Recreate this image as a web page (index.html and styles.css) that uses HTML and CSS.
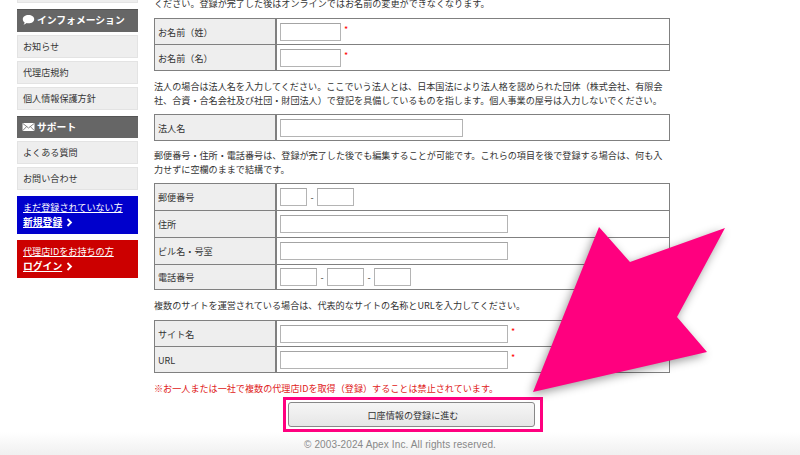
FILE: index.html
```html
<!DOCTYPE html>
<html lang="ja">
<head>
<meta charset="utf-8">
<title>代理店登録</title>
<link rel="stylesheet" href="styles.css">
</head>
<body>
<div class="page">
  <div class="content">
    <aside class="sidebar">
      <div class="clip-item"></div>
      <div class="side-head info">
        <svg class="ic" width="13" height="12" viewBox="0 0 13 12"><path d="M6.5 1C9.8 1 12.2 2.8 12.2 5.2S9.8 9.3 6.5 9.3C5.8 9.3 5.2 9.2 4.7 9.1 3.8 10 2.7 10.6 1.5 10.8 2.2 10 2.6 9.2 2.7 8.5 1.5 7.7.8 6.5.8 5.2.8 2.8 3.2 1 6.5 1Z" fill="#fff"/></svg>
        <span>インフォメーション</span>
      </div>
      <a class="side-item">お知らせ</a>
      <a class="side-item">代理店規約</a>
      <a class="side-item">個人情報保護方針</a>
      <div class="side-head support">
        <svg class="ic" width="13" height="10" viewBox="0 0 13 10"><path d="M.5 1H12.5V9H.5Z" fill="#fff"/><path d="M.5 1.2 6.5 6 12.5 1.2M.5 8.8 4.6 4.6M12.5 8.8 8.4 4.6" fill="none" stroke="#666" stroke-width=".8"/></svg>
        <span>サポート</span>
      </div>
      <a class="side-item">よくある質問</a>
      <a class="side-item">お問い合わせ</a>
      <a class="cta blue">
        <span class="cta-top">まだ登録されていない方</span>
        <span class="cta-main"><span class="cta-link">新規登録</span><svg class="chev" width="7" height="9" viewBox="0 0 7 9"><path d="M1.5 1 5 4.5 1.5 8" fill="none" stroke="#fff" stroke-width="1.8"/></svg></span>
      </a>
      <a class="cta red">
        <span class="cta-top">代理店IDをお持ちの方</span>
        <span class="cta-main"><span class="cta-link">ログイン</span><svg class="chev" width="7" height="9" viewBox="0 0 7 9"><path d="M1.5 1 5 4.5 1.5 8" fill="none" stroke="#fff" stroke-width="1.8"/></svg></span>
      </a>
    </aside>
    <main class="main">
      <p class="note first">ください。登録が完了した後はオンラインではお名前の変更ができなくなります。</p>
      <table class="form">
        <tr><th>お名前（姓）</th><td><input class="w-s" type="text"><span class="req">*</span></td></tr>
        <tr><th>お名前（名）</th><td><input class="w-s" type="text"><span class="req">*</span></td></tr>
      </table>
      <p class="note">法人の場合は法人名を入力してください。ここでいう法人とは、日本国法により法人格を認められた団体（株式会社、有限会<br>社、合資・合名会社及び社団・財団法人）で登記を具備しているものを指します。個人事業の屋号は入力しないでください。</p>
      <table class="form">
        <tr><th>法人名</th><td><input class="w-m" type="text"></td></tr>
      </table>
      <p class="note tight">郵便番号・住所・電話番号は、登録が完了した後でも編集することが可能です。これらの項目を後で登録する場合は、何も入<br>力せずに空欄のままで結構です。</p>
      <table class="form four">
        <tr><th>郵便番号</th><td><input class="w-zip1" type="text"><span class="dash">-</span><input class="w-zip2" type="text"></td></tr>
        <tr><th>住所</th><td><input class="w-l" type="text"></td></tr>
        <tr><th>ビル名・号室</th><td><input class="w-l" type="text"></td></tr>
        <tr><th>電話番号</th><td><input class="w-tel" type="text"><span class="dash">-</span><input class="w-tel" type="text"><span class="dash">-</span><input class="w-tel" type="text"></td></tr>
      </table>
      <p class="note single">複数のサイトを運営されている場合は、代表的なサイトの名称とURLを入力してください。</p>
      <table class="form">
        <tr><th>サイト名</th><td><input class="w-l" type="text"><span class="req">*</span></td></tr>
        <tr><th>URL</th><td><input class="w-l" type="text"><span class="req">*</span></td></tr>
      </table>
      <p class="warn">※お一人または一社で複数の代理店IDを取得（登録）することは禁止されています。</p>
      <div class="submit-mark"><button class="submit" type="button">口座情報の登録に進む</button></div>
    </main>
  </div>
  <footer class="footer">© 2003-2024 Apex Inc. All rights reserved.</footer>
</div>
<svg class="arrow" width="800" height="455" viewBox="0 0 800 455"><polygon points="599,227 630,262 725,228 677,317 707,352 533,392" fill="#ff007f"/></svg>
</body>
</html>
```
FILE: styles.css
```css
html, body { margin: 0; padding: 0; }
body {
  width: 800px;
  height: 455px;
  overflow: hidden;
  position: relative;
  background: #fff;
  color: #333;
  font-family: "Noto Sans CJK JP", "Liberation Sans", sans-serif;
  font-size: 9.1px;
}
.page { display: flex; flex-direction: column; height: 455px; overflow: hidden; }
.content { display: flex; gap: 16px; padding-left: 17px; }

.sidebar { width: 121px; flex: none; display: flex; flex-direction: column; }
.clip-item { height: 3px; background: #eee; border: 1px solid #e4e4e4; border-top: 0; box-sizing: border-box; margin-bottom: 6px; }
.side-head {
  height: 23px;
  background: #666;
  color: #fff;
  font-weight: 700;
  font-size: 9.8px;
  display: flex;
  align-items: center;
  gap: 2px;
  padding-left: 5px;
  padding-bottom: 1px;
  box-sizing: border-box;
  box-shadow: inset 0 1px 0 #555;
  margin-bottom: 3px;
}
.side-head.support { margin-top: 3px; height: 22px; }
.side-item {
  height: 23px;
  box-sizing: border-box;
  background: #eee;
  border: 1px solid #e3e3e3;
  display: flex;
  align-items: center;
  padding-left: 5px;
  padding-bottom: 1px;
  color: #333;
  margin-bottom: 3px;
}
.cta {
  display: flex;
  flex-direction: column;
  height: 38px;
  box-sizing: border-box;
  padding: 4px 6px 0;
  color: #fff;
  line-height: 14px;
  margin-bottom: 6px;
}
.cta.blue { background: #0000cc; margin-top: 3px; }
.cta.red { background: #cc0000; }
.cta-top { text-decoration: underline; }
.cta-main { display: flex; align-items: center; gap: 4px; font-weight: 700; font-size: 9.8px; margin-top: 1px; }
.cta-link { text-decoration: underline; }

.main { width: 516px; flex: none; margin-top: -4px; }
.note { margin: 8px 0 7px; line-height: 14px; color: #333; white-space: nowrap; }
.note.first { margin: 0 0 8px; }
.note.tight { margin-top: 7px; }
.note.single { margin-bottom: 8px; }
.form {
  border-collapse: separate;
  border-spacing: 0;
  width: 516px;
  table-layout: fixed;
  border: 1px solid #808080;
  box-sizing: border-box;
}
.form th, .form td { height: 26px; padding: 0; box-sizing: border-box; border-bottom: 1px solid #808080; }
.form tr:last-child th, .form tr:last-child td { height: 25px; border-bottom: 0; }
.form.four th, .form.four td { height: 27px; }
.form.four tr:last-child th, .form.four tr:last-child td { height: 24px; }
.form th {
  width: 122px;
  background: #eee;
  font-weight: 400;
  text-align: left;
  padding-left: 3px;
  color: #333;
  font-size: 9.1px;
  border-right: 2px solid #808080;
}
.form td { padding-left: 3px; white-space: nowrap; }
.form input {
  box-sizing: border-box;
  height: 18px;
  margin: 0;
  padding: 0;
  vertical-align: middle;
  border: 1px solid #b4b4b4;
  border-top-color: #a4a4a4;
  background: #fff;
  border-radius: 0;
  outline: 0;
}
.w-s { width: 61px; }
.w-m { width: 183px; }
.w-l { width: 228px; }
.w-zip1 { width: 27px; }
.w-zip2 { width: 37px; }
.w-tel { width: 37px; }
.dash { display: inline-block; width: 10px; text-align: center; vertical-align: middle; }
.req { color: #f00; margin-left: 3px; vertical-align: middle; position: relative; top: -2px; font-size: 9px; }
.warn { margin: 8px 0 2px; line-height: 14px; color: #e02020; white-space: nowrap; }
.submit-mark {
  box-sizing: border-box;
  width: 260px;
  height: 35px;
  margin: 0 0 0 129px;
  border: 3px solid #ff007f;
  padding: 2px;
  background: #fff;
}
.submit {
  display: block;
  width: 247px;
  height: 25px;
  margin: 0;
  padding: 0 0 0 3px;
  border: 1px solid #888;
  border-radius: 3px;
  background: linear-gradient(#f6f6f6, #e6e6e6);
  color: #333;
  font-family: inherit;
  font-size: 9.1px;
}
.footer {
  flex: 1;
  background: linear-gradient(#fff, #f0f0f0);
  color: #888;
  text-align: center;
  font-family: "Liberation Sans", sans-serif;
  font-size: 10px;
  letter-spacing: .12px;
  padding-top: 7px;
}
.arrow {
  position: absolute;
  left: 0;
  top: 0;
  pointer-events: none;
  filter: drop-shadow(-2px 3px 5px rgba(0, 0, 0, .4));
}
```
